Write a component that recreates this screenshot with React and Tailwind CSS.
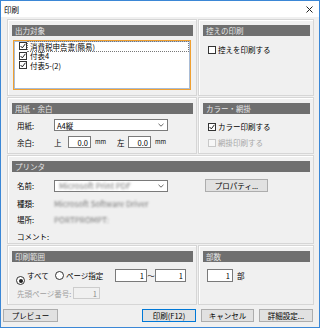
import React from "react";

const t = "text-[7.5px] leading-[9px] whitespace-nowrap";

const Check = ({ checked, disabled }) => (
  <span
    className={
      "inline-flex h-[8px] w-[8px] shrink-0 items-center justify-center border " +
      (disabled ? "border-[#c8c8c8] bg-[#f7f7f7]" : "border-[#333] bg-white")
    }
  >
    {checked && (
      <svg width="6" height="6" viewBox="0 0 6 6">
        <path d="M0.6 3 L2.3 4.9 L5.4 0.8" fill="none" stroke="#222" strokeWidth="1" />
      </svg>
    )}
  </span>
);

const Radio = ({ on }) => (
  <span className="inline-flex h-[9px] w-[9px] shrink-0 items-center justify-center rounded-full border border-[#333] bg-white">
    {on && <span className="h-[4px] w-[4px] rounded-full bg-[#222]" />}
  </span>
);

const Field = ({ className = "", value, disabled }) => (
  <div
    className={
      "flex h-[12px] items-center justify-end border pr-[2px] text-[7.5px] leading-[9px] " +
      (disabled ? "border-[#cccccc] bg-[#f0f0f0] text-[#8a8a8a] " : "border-[#7a7a7a] bg-white text-black ") +
      className
    }
  >
    {value}
  </div>
);

const Chevron = () => (
  <svg width="6" height="4" viewBox="0 0 6 4" className="mr-[3px]">
    <path d="M0.5 0.8 L3 3.2 L5.5 0.8" fill="none" stroke="#555" strokeWidth="0.9" />
  </svg>
);

const Panel = ({ title, className = "", children }) => (
  <div className={"border border-[#d6d6d6] pl-[4px] pr-[3px] pt-[5px] shadow-[inset_1px_1px_0_#ffffff] " + className}>
    <div className="h-[11px] bg-[#6f6f6f] pl-[3px] text-[7.5px] leading-[11px] text-[#e6e6e6]">{title}</div>
    {children}
  </div>
);

const Button = ({ children, className = "", primary }) => (
  <div
    className={
      "flex h-[13px] items-center justify-center border bg-[#e1e1e1] text-[7.5px] leading-[9px] " +
      (primary ? "border-[#0078d7] " : "border-[#adadad] ") +
      className
    }
  >
    {children}
  </div>
);

const Blur = ({ children }) => (
  <span className="whitespace-nowrap text-[8px] leading-[9px] text-[#777] blur-[1.3px]">{children}</span>
);

export default function App() {
  const items = ["消費税申告書(簡易)", "付表4", "付表5-(2)"];

  return (
    <div className="flex h-[328px] w-[320px] flex-col overflow-hidden border border-[#3b87d6] bg-[#f0f0f0] font-['Noto_Sans_CJK_JP',sans-serif] text-black">
      {/* title bar */}
      <div className="flex h-[16px] shrink-0 items-center justify-between bg-white pl-[3px] pr-[6px]">
        <span className={t}>印刷</span>
        <svg width="7" height="7" viewBox="0 0 7 7">
          <path d="M0.5 0.5 L6.5 6.5 M6.5 0.5 L0.5 6.5" stroke="#222" strokeWidth="1" />
        </svg>
      </div>

      <div className="ml-[6px] mt-[2px] grid grid-cols-[190px_116px] grid-rows-[77px_57px_89px_60px] gap-[1px]">
        {/* 出力対象 */}
        <Panel title="出力対象">
          <div className="ml-[1px] mt-[4px] h-[50px] w-[178px] border border-[#f0a030] bg-white pl-[5px] pt-[0.5px] shadow-[inset_0_0_0_1px_#a9bcd6]">
            {items.map((label, i) => (
              <div key={label} className="flex h-[9.5px] items-center">
                <Check checked />
                <span
                  className={
                    "ml-[1px] flex h-[9px] flex-1 items-center pl-[2px] " +
                    t +
                    (i === 0 ? " mr-[2px] outline-1 outline-dotted outline-[#777]" : "")
                  }
                >
                  {label}
                </span>
              </div>
            ))}
          </div>
        </Panel>

        {/* 控えの印刷 */}
        <Panel title="控えの印刷">
          <div className="ml-[5px] mt-[9px] flex items-center">
            <Check />
            <span className={"ml-[2px] " + t}>控えを印刷する</span>
          </div>
        </Panel>

        {/* 用紙・余白 */}
        <Panel title="用紙・余白">
          <div className="mt-[5px] flex items-center">
            <span className={"ml-[5px] w-[37px] " + t}>用紙:</span>
            <div className="flex h-[12px] w-[114px] items-center justify-between border border-[#7a7a7a] bg-white pl-[2px]">
              <span className={t}>A4縦</span>
              <Chevron />
            </div>
          </div>
          <div className="mt-[5px] flex items-center">
            <span className={"ml-[5px] w-[37px] " + t}>余白:</span>
            <span className={"w-[14px] " + t}>上</span>
            <Field className="w-[23px]" value="0.0" />
            <span className="ml-[4px] w-[18px] text-[6px] leading-[8px]">mm</span>
            <span className={"ml-[4px] w-[11px] " + t}>左</span>
            <Field className="w-[23px]" value="0.0" />
            <span className="ml-[4px] text-[6px] leading-[8px]">mm</span>
          </div>
        </Panel>

        {/* カラー・網掛 */}
        <Panel title="カラー・網掛">
          <div className="ml-[5px] mt-[8px] flex items-center">
            <Check checked />
            <span className={"ml-[2px] " + t}>カラー印刷する</span>
          </div>
          <div className="ml-[5px] mt-[7px] flex items-center">
            <Check disabled />
            <span className={"ml-[2px] text-[#a8a8a8] " + t}>網掛印刷する</span>
          </div>
        </Panel>

        {/* プリンタ */}
        <Panel title="プリンタ" className="col-span-2">
          <div className="mt-[7px] flex items-center">
            <span className={"ml-[5px] w-[37px] " + t}>名前:</span>
            <div className="flex h-[12px] w-[114px] items-center justify-between border border-[#7a7a7a] bg-white pl-[4px]">
              <Blur>Microsoft Print PDF</Blur>
              <Chevron />
            </div>
            <Button className="ml-[37px] w-[63px]">プロパティ...</Button>
          </div>
          <div className="mt-[5px] flex h-[12px] items-center">
            <span className={"ml-[5px] w-[37px] " + t}>種類:</span>
            <Blur>Microsoft Software Driver</Blur>
          </div>
          <div className="mt-[4px] flex h-[12px] items-center">
            <span className={"ml-[5px] w-[37px] " + t}>場所:</span>
            <Blur>PORTPROMPT:</Blur>
          </div>
          <div className="mt-[5px] flex h-[12px] items-center">
            <span className={"ml-[5px] w-[37px] " + t}>コメント:</span>
          </div>
        </Panel>

        {/* 印刷範囲 */}
        <Panel title="印刷範囲">
          <div className="mt-[7px] flex h-[13px] items-center">
            <span className="ml-[4px]">
              <Radio on />
            </span>
            <span className={"ml-[2px] w-[28px] " + t}>すべて</span>
            <Radio />
            <span className={"ml-[2px] w-[49px] " + t}>ページ指定</span>
            <Field className="h-[13px] w-[32px]" value="1" />
            <span className={"w-[8px] text-center " + t}>〜</span>
            <Field className="h-[13px] w-[31px]" value="1" />
          </div>
          <div className="mt-[5px] flex items-center">
            <span className={"ml-[5px] w-[56px] text-[#a0a0a0] " + t}>先頭ページ番号:</span>
            <Field className="w-[27px]" value="1" disabled />
          </div>
        </Panel>

        {/* 部数 */}
        <Panel title="部数">
          <div className="mt-[7px] flex items-center">
            <Field className="ml-[4px] h-[13px] w-[26px]" value="1" />
            <span className={"ml-[4px] " + t}>部</span>
          </div>
        </Panel>
      </div>

      {/* bottom buttons */}
      <div className="mt-[4px] flex items-center pl-[2px]">
        <Button className="w-[55px]">プレビュー</Button>
        <Button primary className="ml-[84px] w-[54px]">印刷(F12)</Button>
        <Button className="ml-[5px] w-[53px]">キャンセル</Button>
        <Button className="ml-[5px] w-[54px]">詳細設定...</Button>
      </div>
    </div>
  );
}
